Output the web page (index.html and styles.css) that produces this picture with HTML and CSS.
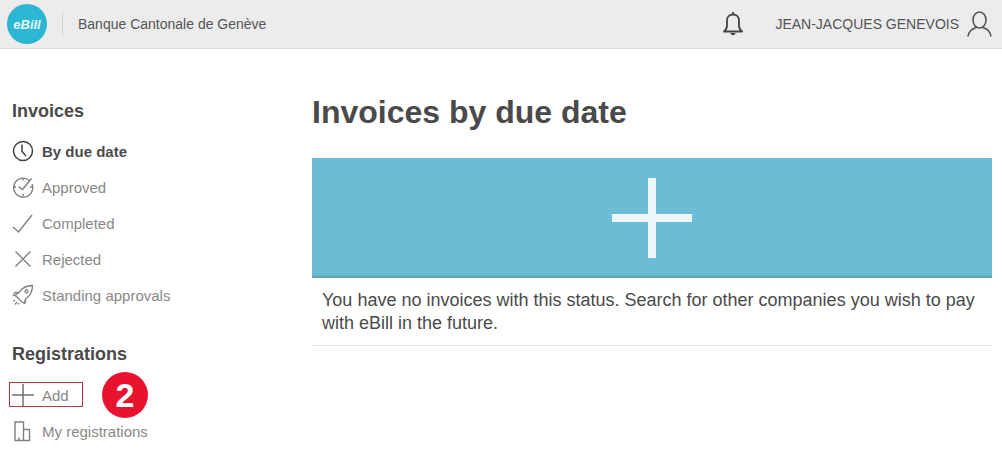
FILE: index.html
```html
<!DOCTYPE html>
<html lang="en">
<head>
  <meta charset="UTF-8">
  <title>eBill</title>
  <link rel="stylesheet" href="styles.css">
</head>
<body>

  <header class="topbar">
    <div class="logo">eBill</div>
    <div class="divider"></div>
    <div class="bank">Banque Cantonale de Genève</div>
    <svg class="bell" width="20" height="26" viewBox="0 0 20 26" fill="none" stroke="#444" stroke-width="1.8">
      <path d="M1 20.500c2-1.500 3-3 3-6V9.500c0-3.500 2.500-6 6-6s6 2.500 6 6V14.500c0 3 1 4.500 3 6z" stroke-linejoin="round"/>
      <path d="M10 1v2.500" />
      <path d="M7.500 22c.5 3 4.500 3 5 0z" fill="#444" stroke="none"/>
    </svg>
    <div class="user">JEAN-JACQUES GENEVOIS</div>
    <svg class="avatar" width="25" height="26" viewBox="0 0 25 26" fill="none" stroke="#555" stroke-width="1.6">
      <ellipse cx="12.500" cy="9" rx="6.500" ry="8"/>
      <path d="M1 25.500c.5-5 3.500-7.500 8-9M24 25.500c-.5-5-3.500-7.500-8-9"/>
    </svg>
  </header>

  <div class="layout">
    <nav class="sidebar">
      <h3>Invoices</h3>
      <ul>
        <li class="active">
          <svg width="22" height="22" viewBox="0 0 22 22" fill="none" stroke="#444" stroke-width="1.500"><circle cx="11" cy="11" r="9.500"/><path d="M10 4.500V11.500l4 4.500"/></svg>
          By due date
        </li>
        <li>
          <svg width="22" height="22" viewBox="0 0 22 22" fill="none" stroke="#808080" stroke-width="1.400"><path d="M17.500 4.500A9.500 9.500 0 1 0 20 8"/><path d="M6.500 10.500l4 3 9-11M11 2v2.500M11 18v2.500M1.500 11H4M18 11h2.500"/></svg>
          Approved
        </li>
        <li>
          <svg width="22" height="22" viewBox="0 0 22 22" fill="none" stroke="#808080" stroke-width="1.400"><path d="M1 15l5.500 5L20 3"/></svg>
          Completed
        </li>
        <li>
          <svg width="22" height="22" viewBox="0 0 22 22" fill="none" stroke="#808080" stroke-width="1.400"><path d="M3.500 3.500l15 15M18.500 3.500l-15 15"/></svg>
          Rejected
        </li>
        <li>
          <svg width="22" height="22" viewBox="0 0 22 22" fill="none" stroke="#808080" stroke-width="1.300"><path d="M7 8.500C10 4 15 1.500 20.500 1.500 20.500 7 18 12 13.500 15l-1 4.500-3-2-4-4-2.500-2z"/><path d="M7 8.500H3l-2 3.500M13.500 15v4M3 16l-1.500 1.500M5 18l-2 2.500M7 19l-1 1.500"/><circle cx="14.500" cy="7.500" r="1.500"/></svg>
          Standing approvals
        </li>
      </ul>
      <h3 class="second">Registrations</h3>
      <ul>
        <li class="add">
          <svg width="22" height="22" viewBox="0 0 22 22" fill="none" stroke="#707070" stroke-width="1.500"><path d="M11 0v22M0 11h22"/></svg>
          Add
          <span class="badge">2</span>
        </li>
        <li>
          <svg width="22" height="22" viewBox="0 0 22 22" fill="none" stroke="#808080" stroke-width="1.400"><path d="M11.500 20.500H3V2h8.500zM11.500 9.500h6v11h-6M7 20.500v-3"/></svg>
          My registrations
        </li>
      </ul>
    </nav>

    <main class="content">
      <h1>Invoices by due date</h1>
      <div class="card">
        <div class="banner">
          <div class="plus"></div>
        </div>
        <p>You have no invoices with this status. Search for other companies you wish to pay with eBill in the future.</p>
      </div>
    </main>
  </div>

</body>
</html>
```

FILE: styles.css
```css
html, body { margin: 0; height: 451px; overflow: hidden; }
body { font-family: "Liberation Sans", Arial, sans-serif; background: #fff; color: #444; }

.topbar { height: 48px; background: #ececec; border-bottom: 1px solid #dcdcdc; display: flex; align-items: center; padding: 0 10px 0 7px; }
.logo { width: 40px; height: 40px; border-radius: 50%; background: #2bb7d3; color: #e8f7fa; font-size: 13px; font-weight: bold; font-style: italic; display: flex; align-items: center; justify-content: center; }
.divider { width: 1px; height: 24px; background: #d2d2d2; margin: 0 15px; }
.bank { font-size: 14px; color: #555; flex: 1; }
.bell { margin-right: 32px; }
.user { font-size: 14px; color: #555; margin-right: 8px; }

.layout { display: flex; }
.sidebar { width: 300px; padding: 52px 0 0 12px; box-sizing: border-box; }
.sidebar h3 { margin: 0 0 12px; font-size: 18px; line-height: 20px; color: #4a4a4a; }
.sidebar h3.second { margin-top: 31px; margin-bottom: 13px; }
.sidebar ul { list-style: none; margin: 0; padding: 0; }
.sidebar li { height: 36px; display: flex; align-items: center; gap: 8px; font-size: 15px; color: #888; position: relative; }
.sidebar li.active { font-weight: bold; color: #4a4a4a; }
.sidebar li.add::before { content: ""; position: absolute; left: -3px; top: 5px; width: 72px; height: 23px; border: 1px solid #b23a48; }
.badge { position: absolute; left: 90px; top: -5px; width: 46px; height: 46px; border-radius: 50%; background: #e8142f; color: #fff; font-size: 34px; font-weight: bold; display: flex; align-items: center; justify-content: center; }

.content { flex: 1; padding: 0 10px 0 12px; }
.content h1 { margin: 44px 0 27px; font-size: 32px; line-height: 38px; color: #4a4a4a; }
.card { border-bottom: 1px solid #e2e2e2; }
.banner { height: 120px; background: #6bbdd5; box-shadow: inset 0 -3px 2px -1px #5ea3b5; display: flex; align-items: center; justify-content: center; }
.plus { width: 80px; height: 80px; background: linear-gradient(#eef8fb, #eef8fb) center / 100% 8px no-repeat, linear-gradient(#eef8fb, #eef8fb) center / 8px 100% no-repeat; }
.card p { margin: 0; padding: 11px 10px 10px; font-size: 18px; line-height: 23px; color: #4a4a4a; }
```
